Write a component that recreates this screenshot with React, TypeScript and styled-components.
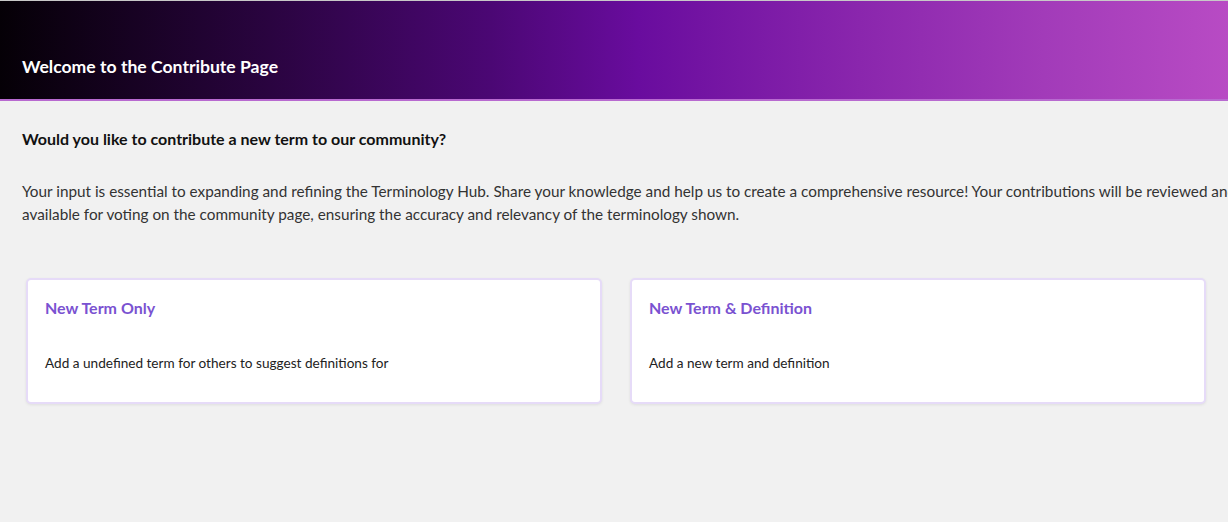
import React from 'react';
import styled, { createGlobalStyle } from 'styled-components';

const GlobalStyle = createGlobalStyle`
  html, body {
    margin: 0;
    padding: 0;
    background: #f1f1f1;
    overflow: hidden;
  }

  body {
    font-family: Lato, 'Noto Sans', sans-serif;
    color: #222;
  }
`;

const Page = styled.div`
  min-height: 522px;
  border-top: 1px solid #c8c8c8;
`;

const Banner = styled.header`
  height: 100px;
  display: flex;
  align-items: flex-end;
  padding: 0 22px 22px;
  box-sizing: border-box;
  background: linear-gradient(90deg, #050006 0%, #2a0440 22%, #4b0774 40%, #690c9e 52%, #8a26ad 70%, #a23bb9 85%, #b84bc4 100%);
  border-bottom: 2px solid #b86ad0;

  h1 {
    margin: 0;
    font-size: 17.6px;
    font-weight: 700;
    color: #fff;
  }
`;

const Content = styled.main`
  padding: 28px 22px 0;
`;

const Question = styled.h2`
  margin: 0;
  font-size: 16px;
  font-weight: 700;
  color: #111;
`;

const Intro = styled.p`
  margin: 32px 0 0;
  font-size: 15.3px;
  line-height: 23px;
  color: #333;
  white-space: nowrap;
`;

const Options = styled.div`
  display: grid;
  grid-template-columns: 1fr 1fr;
  gap: 28px;
  margin: 52px 0 0 4px;
`;

const Card = styled.div`
  height: 126px;
  box-sizing: border-box;
  padding: 18px 17px;
  background: #fff;
  border: 2px solid #e6dbf8;
  border-radius: 5px;
  box-shadow: 0 1px 3px rgba(0, 0, 0, 0.08);
  cursor: pointer;
`;

const CardTitle = styled.h3`
  margin: 0;
  font-size: 16px;
  font-weight: 700;
  color: #7a52d1;
`;

const CardText = styled.p`
  margin: 38px 0 0;
  font-size: 13.6px;
  color: #222;
`;

const options = [
  { title: 'New Term Only', text: 'Add a undefined term for others to suggest definitions for' },
  { title: 'New Term & Definition', text: 'Add a new term and definition' },
];

const App = () => {
  return (
    <Page>
      <GlobalStyle />
      <Banner>
        <h1>Welcome to the Contribute Page</h1>
      </Banner>

      <Content>
        <Question>Would you like to contribute a new term to our community?</Question>

        <Intro>
          Your input is essential to expanding and refining the Terminology Hub. Share your knowledge and help us to create a comprehensive resource! Your contributions will be reviewed and made
          <br />
          available for voting on the community page, ensuring the accuracy and relevancy of the terminology shown.
        </Intro>

        <Options>
          {options.map((o) => (
            <Card key={o.title}>
              <CardTitle>{o.title}</CardTitle>
              <CardText>{o.text}</CardText>
            </Card>
          ))}
        </Options>
      </Content>
    </Page>
  );
};

export default App;
